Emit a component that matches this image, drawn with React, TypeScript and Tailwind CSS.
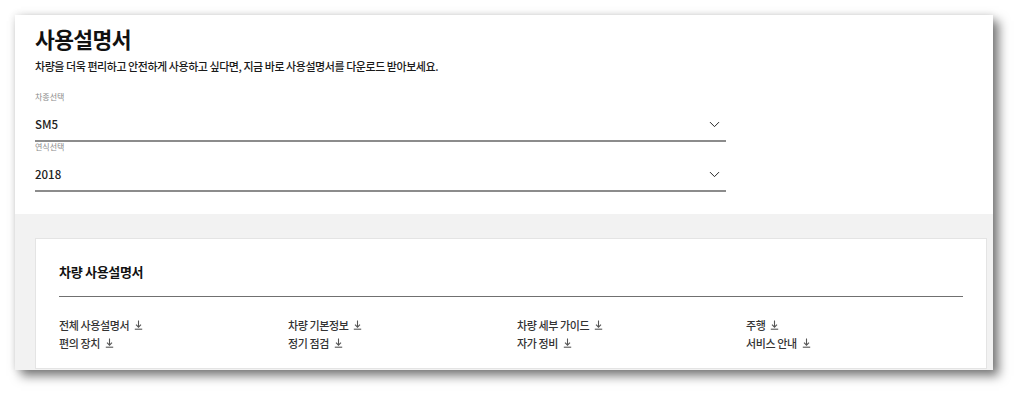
import { ChevronDown } from 'lucide-react';

const ITEMS = [
  '전체 사용설명서', '차량 기본정보', '차량 세부 가이드', '주행',
  '편의 장치', '정기 점검', '자가 정비', '서비스 안내',
];

function DownloadIcon() {
  return (
    <svg width="9" height="10" viewBox="0 0 9 10" className="ml-[5px] shrink-0 text-[#555]" fill="none" stroke="currentColor" strokeWidth="1.1">
      <path d="M4.5 0.5v6.5" />
      <path d="M2 4.6l2.5 2.5 2.5-2.5" />
      <path d="M0.8 9.2h7.4" />
    </svg>
  );
}

function SelectField({ label, value }: { label: string; value: string }) {
  return (
    <div className="w-[691px]">
      <p className="text-[8px] leading-[10px] text-[#8a8a8a] h-[10px]">{label}</p>
      <div className="flex items-center justify-between h-[40px] pt-[7px] border-b-2 border-[#8c8c8c]">
        <span className="text-[11.5px] font-medium text-[#222]">{value}</span>
        <ChevronDown size={17} strokeWidth={1.4} className="text-[#222] mr-[3px]" />
      </div>
    </div>
  );
}

export default function App() {
  return (
    <div className="w-[1024px] h-[403px] bg-white pt-[15px] pl-[15px]" style={{ fontFamily: '"Noto Sans CJK KR", "Noto Sans", sans-serif' }}>
      <div className="w-[978px] h-[355px] overflow-hidden flex flex-col bg-[#f2f2f2] shadow-[0_0_8px_rgba(0,0,0,0.12),6px_6px_10px_rgba(0,0,0,0.5)]">
        <div className="bg-white h-[199px] shrink-0 px-[20px] pt-[10px]">
          <h1 className="text-[21.5px] leading-[28px] font-bold text-[#111] tracking-[-0.6px]">사용설명서</h1>
          <p className="mt-[4px] text-[11px] leading-[18px] font-medium text-[#1a1a1a] tracking-[-0.45px]">
            차량을 더욱 편리하고 안전하게 사용하고 싶다면, 지금 바로 사용설명서를 다운로드 받아보세요.
          </p>
          <div className="mt-[17px]">
            <SelectField label="차종선택" value="SM5" />
            <SelectField label="연식선택" value="2018" />
          </div>
        </div>
        <div className="flex-1 pl-[20px] pr-[6px] pt-[24px]">
          <div className="bg-white border border-[#e4e4e4] h-[131px] px-[23px] pt-[24px]">
            <h2 className="text-[13px] leading-[18px] font-bold text-[#111] tracking-[-0.3px]">차량 사용설명서</h2>
            <div className="mt-[15px] border-t border-[#707070]" />
            <div className="grid grid-cols-[229px_229px_229px_229px] mt-[19px]">
              {ITEMS.map(item => (
                <div key={item} className="flex items-center h-[18px] text-[11px] font-medium text-[#333] tracking-[-0.4px]">
                  {item}
                  <DownloadIcon />
                </div>
              ))}
            </div>
          </div>
        </div>
      </div>
    </div>
  );
}
